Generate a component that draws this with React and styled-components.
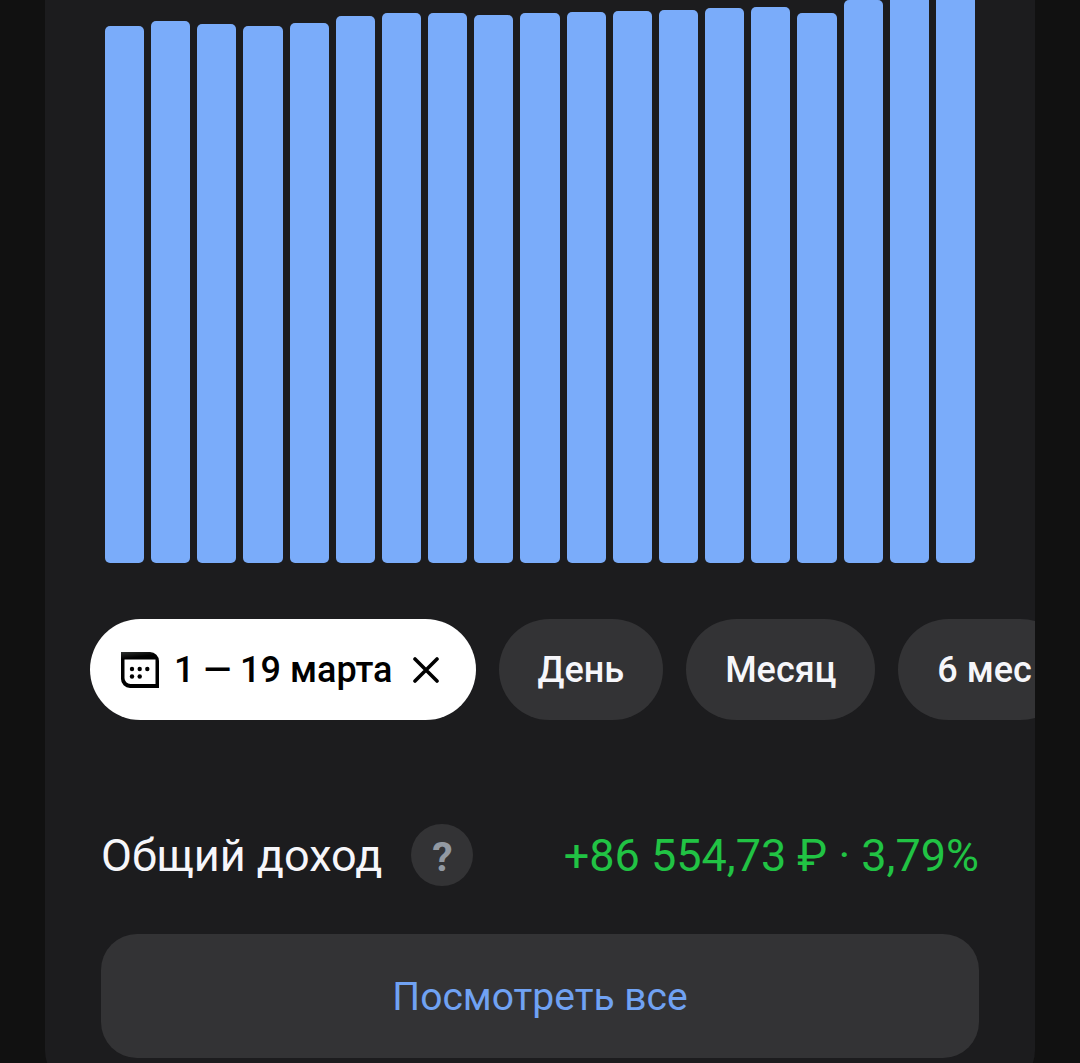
import React, { useState } from 'react'
import styled, { createGlobalStyle } from 'styled-components'

const GlobalStyle = createGlobalStyle`
    * {
        box-sizing: border-box;
    }
    body {
        margin: 0;
        background: #111111;
        font-family: Roboto, "Noto Sans", sans-serif;
    }
    button {
        font-family: inherit;
        border: none;
        cursor: pointer;
    }
`

const Page = styled.div`
    height: 100vh;
    padding: 0 45px;
    overflow-y: auto;
    scrollbar-width: none;
`
const Card = styled.main`
    background: #1c1c1e;
    border-radius: 0 0 42px 42px;
    padding-bottom: 34px;
`
const Chart = styled.div`
    display: flex;
    align-items: flex-end;
    gap: 7px;
    height: 563px;
    padding: 0 60px;
    overflow: hidden;
`
const Bar = styled.div`
    flex: 1;
    flex-shrink: 0;
    background: #7aacfa;
    border-radius: 5px;
`
const Chips = styled.div`
    display: flex;
    gap: 23px;
    padding: 0 45px;
    margin-top: 56px;
    overflow-x: auto;
    scrollbar-width: none;
`
const Chip = styled.button`
    display: flex;
    flex: none;
    align-items: center;
    height: 101px;
    padding: ${({ $active }) => ($active ? '0 37px 0 31px' : '0 39px')};
    border-radius: 51px;
    background: ${({ $active }) => ($active ? '#ffffff' : '#333335')};
    color: ${({ $active }) => ($active ? '#000000' : '#f6f6fa')};
    font-size: 36px;
    font-weight: 500;
    white-space: nowrap;
    svg {
        flex: none;
    }
`
const ChipLabel = styled.span`
    margin: 0 20px 0 15px;
`
const Income = styled.section`
    display: flex;
    align-items: center;
    justify-content: space-between;
    padding: 0 56px;
    margin-top: 104px;
`
const IncomeTitle = styled.div`
    display: flex;
    align-items: center;
    gap: 29px;
    color: #f6f6fa;
    font-size: 45px;
`
const Hint = styled.button`
    width: 62px;
    height: 62px;
    padding: 4px 0 0;
    border-radius: 50%;
    background: #333335;
    color: #9299a2;
    font-size: 41px;
    font-weight: 700;
    line-height: 58px;
`
const Amount = styled.div`
    color: #21c344;
    font-size: 45px;
    white-space: nowrap;
`
const Footer = styled.div`
    display: flex;
    padding: 0 56px;
    margin-top: 48px;
`
const MoreButton = styled.button`
    flex: 1;
    height: 124px;
    padding: 2px 0 0;
    border-radius: 36px;
    background: #333335;
    color: #70a2f3;
    font-size: 39px;
`

const bars = [537, 542, 539, 537, 540, 547, 550, 550, 548, 550, 551, 552, 553, 555, 556, 550, 563, 572, 574]

const periods = ['День', 'Месяц', '6 мес']

const CalendarIcon = () => (
    <svg width="38" height="36" viewBox="0 0 38 36" aria-hidden="true">
        <defs>
            <linearGradient id="calendarTop" x1="0" y1="0" x2="0.15" y2="1">
                <stop offset="0" stopColor="#303331" />
                <stop offset="0.2" stopColor="#000000" />
            </linearGradient>
        </defs>
        <path
            fill="url(#calendarTop)"
            fillRule="evenodd"
            d="M0 0h29a9 9 0 0 1 9 9v27H9a9 9 0 0 1-9-9zM3.5 7.5V26a6 6 0 0 0 6 6h25V7.5z"
        />
        <circle cx="11" cy="17" r="2.2" />
        <circle cx="18.7" cy="17" r="2.2" />
        <circle cx="26.3" cy="17" r="2.2" />
        <circle cx="11" cy="24.5" r="2.2" />
        <circle cx="18.7" cy="24.5" r="2.2" />
    </svg>
)

const CloseIcon = () => (
    <svg width="26" height="26" viewBox="0 0 26 26" aria-hidden="true">
        <path d="M2 2l22 22M24 2L2 24" stroke="#000000" strokeWidth="3.6" strokeLinecap="round" />
    </svg>
)

const App = () => {
    const [period, setPeriod] = useState('range')
    return (
        <Page>
            <GlobalStyle />
            <Card>
                <Chart>
                    {bars.map((height, i) => (
                        <Bar key={i} style={{ height }} />
                    ))}
                </Chart>
                <Chips>
                    <Chip $active={period === 'range'} onClick={() => setPeriod('range')}>
                        <CalendarIcon />
                        <ChipLabel>1 — 19 марта</ChipLabel>
                        <CloseIcon />
                    </Chip>
                    {periods.map((item) => (
                        <Chip key={item} $active={period === item} onClick={() => setPeriod(item)}>
                            {item}
                        </Chip>
                    ))}
                </Chips>
                <Income>
                    <IncomeTitle>
                        Общий доход
                        <Hint>?</Hint>
                    </IncomeTitle>
                    <Amount>+86 554,73 ₽ · 3,79%</Amount>
                </Income>
                <Footer>
                    <MoreButton>Посмотреть все</MoreButton>
                </Footer>
            </Card>
        </Page>
    )
}

export default App
